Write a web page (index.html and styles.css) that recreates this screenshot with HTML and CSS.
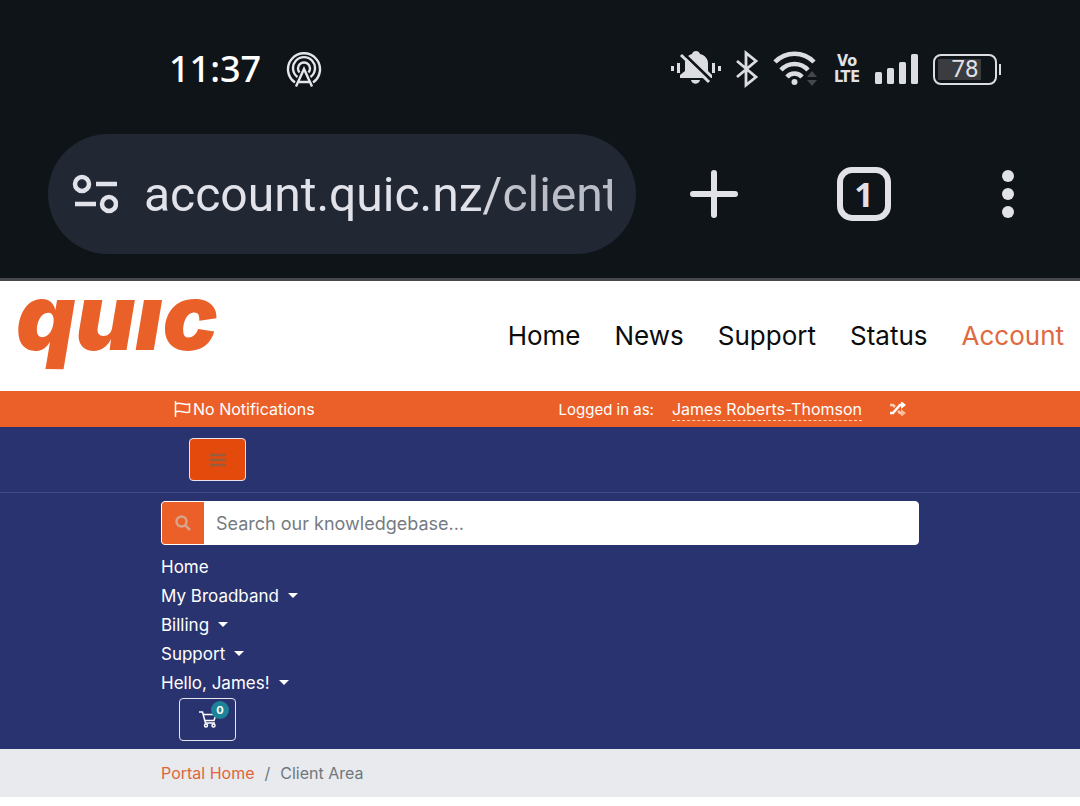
FILE: index.html
```
<!DOCTYPE html>
<html lang="en">

<head>
    <meta charset="UTF-8">
    <meta name="viewport" content="width=device-width, initial-scale=1.0">
    <title>Client Area - Quic</title>
    <link rel="stylesheet" href="styles.css">
</head>

<body>
    <div class="phone">
        <div class="status">
            <span class="clock">11:37</span>
            <svg class="cast" width="36" height="38" viewBox="0 0 36 38" fill="none" stroke="#e4e6ea" stroke-width="2.4">
                <path d="M9 32.500A16 16 0 1 1 27 32.500M11.500 27A11 11 0 1 1 24.500 27M13.500 22.500A6 6 0 1 1 22.500 22.500" />
                <path d="M10 36.500L18 19l8 17.500M12.500 32h11" />
            </svg>
            <div class="status-icons">
                <svg width="50" height="38" viewBox="0 0 50 38">
                    <path fill="#dcdde2" d="M9 28v-3l5-4v-8c0-5 3-8 7-9 1-4 7-4 8 0 5 1 8 5 8 9v8l4 4v3zM20 30h9c-1 5-8 5-9 0z" />
                    <path stroke="#0f1418" stroke-width="3" d="M12 3l28 27" />
                    <path stroke="#dcdde2" stroke-width="3" d="M10 5l28 27M1.500 16v5M7.500 13v10M42.500 13v10M48.500 16v5" />
                </svg>
                <svg width="24" height="38" viewBox="0 0 24 38" fill="none" stroke="#dcdde2" stroke-width="2.800">
                    <path d="M2 11l19 16-10 8V3l10 8L2 27" />
                </svg>
                <svg width="46" height="38" viewBox="0 0 46 38" fill="none" stroke="#dcdde2" stroke-width="4.500">
                    <path d="M2 12a27 27 0 0 1 39 0M8 20a18 18 0 0 1 27 0M14 27a10 10 0 0 1 15 0" />
                    <circle cx="21.500" cy="32" r="3" fill="#dcdde2" stroke="none" />
                    <path fill="#44474b" stroke="none" d="M34 27l5-6 5 6zM34 30h10l-5 6z" />
                </svg>
                <span class="volte">Vo<br>LTE</span>
                <svg width="44" height="38" viewBox="0 0 44 38" fill="#dcdde2">
                    <rect x="0" y="22" width="7" height="12" rx="1.500" />
                    <rect x="12" y="18" width="7" height="16" rx="1.500" />
                    <rect x="24" y="12" width="7" height="22" rx="1.500" />
                    <rect x="36" y="4" width="7" height="30" rx="1.500" />
                </svg>
                <span class="battery"><span>78</span></span>
            </div>
        </div>
        <div class="browser">
            <div class="address">
                <button class="site-info" aria-label="Site information">
                    <svg width="46" height="40" viewBox="0 0 46 40" fill="none" stroke="#e1e2ea" stroke-width="4.500">
                        <circle cx="10" cy="10" r="7" />
                        <path d="M24 10h21M3 30h21" />
                        <circle cx="37" cy="30" r="7" />
                    </svg>
                </button>
                <input class="url" type="text" aria-label="Address" value="account.quic.nz/clientarea.php">
            </div>
            <div class="browser-buttons">
                <button aria-label="New tab">
                    <svg width="48" height="48" viewBox="0 0 48 48" stroke="#e1e2e8" stroke-width="6" stroke-linecap="round">
                        <path d="M24 3v42M3 24h42" />
                    </svg>
                </button>
                <button class="tabs" aria-label="Open tabs">1</button>
                <button aria-label="Menu">
                    <svg width="12" height="48" viewBox="0 0 12 48" fill="#e1e2e8">
                        <circle cx="6" cy="6" r="6" />
                        <circle cx="6" cy="24" r="6" />
                        <circle cx="6" cy="42" r="6" />
                    </svg>
                </button>
            </div>
        </div>
    </div>

    <header class="site-header">
        <a class="logo" href="#" aria-label="Quic">quıc</a>
        <nav class="site-nav">
            <a href="#">Home</a>
            <a href="#">News</a>
            <a href="#">Support</a>
            <a href="#">Status</a>
            <a href="#" class="active">Account</a>
        </nav>
    </header>

    <div class="topbar">
        <div class="container">
            <button class="notifications">
                <svg width="17" height="16" viewBox="0 0 17 16" fill="none" stroke="#fff" stroke-width="1.500">
                    <path d="M1.500 0v16M1.500 3c5-3 8 2 14 0v8c-6 2-9-3-14 0" />
                </svg>
                No Notifications
            </button>
            <div class="logged-in">
                <span>Logged in as:</span>
                <a href="#" class="client">James Roberts-Thomson</a>
                <button class="switch" aria-label="Switch account">
                    <svg width="16" height="14" viewBox="0 0 16 14" fill="none" stroke="#fff" stroke-width="2.500">
                        <path d="M0 11h3l7-8h3" />
                        <path d="M0 3h3l2 2M8 9l2 2h3" stroke="#ffd0b8" />
                        <path d="M11 -1l5 4-5 4z" fill="#fff" stroke="none" />
                        <path d="M11 7l5 4-5 4z" fill="#ffb898" stroke="none" />
                    </svg>
                </button>
            </div>
        </div>
    </div>

    <div class="main-nav">
        <div class="toggle-row">
            <div class="container">
                <button class="toggler" aria-label="Toggle menu">
                    <svg width="16" height="14" viewBox="0 0 16 14" stroke="#9a5c3c" stroke-width="2.500">
                        <path d="M0 2h16M0 7h16M0 12h16" />
                    </svg>
                </button>
            </div>
        </div>
        <div class="container">
            <form class="search">
                <button type="button" aria-label="Search">
                    <svg width="16" height="16" viewBox="0 0 16 16" fill="none" stroke="#d9a28a" stroke-width="2.500">
                        <circle cx="6.500" cy="6.500" r="5" />
                        <path d="M10 10l5 5" />
                    </svg>
                </button>
                <input type="text" aria-label="Search our knowledgebase" placeholder="Search our knowledgebase...">
            </form>
            <ul class="menu">
                <li><a href="#">Home</a></li>
                <li><a href="#" class="dropdown">My Broadband</a></li>
                <li><a href="#" class="dropdown">Billing</a></li>
                <li><a href="#" class="dropdown">Support</a></li>
                <li><a href="#" class="dropdown">Hello, James!</a></li>
            </ul>
            <button class="cart" aria-label="Shopping cart">
                <svg width="18" height="17" viewBox="0 0 18 17" fill="none" stroke="#fff" stroke-width="1.500">
                    <path d="M0 1h3.500l3 11H16M4.500 3.500H17l-2 6H6" />
                    <circle cx="7" cy="14.500" r="1.500" />
                    <circle cx="14.500" cy="14.500" r="1.500" />
                </svg>
                <span class="badge">0</span>
            </button>
        </div>
    </div>

    <nav class="breadcrumb">
        <div class="container">
            <a href="#">Portal Home</a>
            <span class="slash">/</span>
            <span>Client Area</span>
        </div>
    </nav>
</body>

</html>
```
FILE: styles.css
```
* {
    box-sizing: border-box;
}

body {
    margin: 0;
    background: #fff;
    font-family: Inter, "Liberation Sans", sans-serif;
    font-size: 16px;
}

a {
    text-decoration: none;
}

button {
    padding: 0;
    border: 0;
    background: none;
    color: inherit;
    font-family: inherit;
}

svg {
    display: block;
}

.container {
    max-width: 758px;
    margin: 0 auto;
}

/* phone status bar and browser toolbar */
.phone {
    background: #0f1418;
    border-bottom: 3px solid #46484b;
    color: #e1e2e8;
    padding-bottom: 24px;
}

.status {
    display: flex;
    align-items: center;
    padding: 48px 80px 44px 169px;
    height: 134px;
}

.clock {
    color: #fff;
    font-family: "Noto Sans", sans-serif;
    font-size: 36px;
    font-weight: 500;
    line-height: 42px;
}

.cast {
    margin-left: 25px;
}

.status-icons {
    display: flex;
    align-items: center;
    gap: 14px;
    margin-left: auto;
}

.volte {
    width: 28px;
    font-family: "Liberation Sans Narrow", "DejaVu Sans Condensed", sans-serif;
    font-size: 16px;
    font-weight: 700;
    line-height: 16px;
    text-align: center;
}

.battery {
    position: relative;
    width: 64px;
    height: 31px;
    margin-right: 3px;
    padding: 3px;
    border: 2px solid #dcdde2;
    border-radius: 8px;
}

.battery span {
    display: block;
    background: linear-gradient(90deg, #3a3c40 80%, transparent 80%);
    font-family: Roboto, sans-serif;
    font-size: 24px;
    line-height: 21px;
    text-align: center;
}

.battery::after {
    content: "";
    position: absolute;
    right: -6px;
    top: 8px;
    width: 2px;
    height: 11px;
    background: #dcdde2;
}

.browser {
    display: flex;
    align-items: center;
    padding: 0 66px 0 48px;
}

.address {
    display: flex;
    flex: 1;
    align-items: center;
    gap: 26px;
    min-width: 0;
    height: 120px;
    padding: 0 24px;
    border-radius: 60px;
    background: #222833;
}

.url {
    flex: 1;
    min-width: 0;
    height: 60px;
    padding: 0;
    border: 0;
    outline: 0;
    background: none;
    color: #e1e2ea;
    font-family: Roboto, sans-serif;
    font-size: 48px;
    -webkit-mask-image: linear-gradient(90deg, #000 70%, rgba(0, 0, 0, 0.8) 80%);
    mask-image: linear-gradient(90deg, #000 70%, rgba(0, 0, 0, 0.8) 80%);
}

.browser-buttons {
    display: flex;
    flex: 0 0 378px;
    align-items: center;
    justify-content: space-between;
    padding-left: 54px;
}

.tabs {
    width: 54px;
    height: 54px;
    margin-right: 12px;
    border: 6px solid #e1e2e8;
    border-radius: 15px;
    font-family: "Open Sans", sans-serif;
    font-size: 34px;
    font-weight: 700;
    line-height: 42px;
}

/* site header */
.site-header {
    display: flex;
    align-items: center;
    justify-content: space-between;
    height: 110px;
    padding: 0 16px;
}

.logo {
    align-self: flex-start;
    color: #ea6029;
    font-size: 92px;
    font-style: italic;
    font-weight: 900;
    line-height: 72px;
}

.site-nav {
    display: flex;
    gap: 34px;
    font-size: 26px;
    line-height: 38px;
}

.site-nav a {
    color: #0c0c0c;
}

.site-nav .active {
    color: #dd6a41;
}

.topbar {
    background: #eb6028;
    color: #fff;
}

.topbar .container {
    display: flex;
    align-items: center;
    justify-content: space-between;
    height: 36px;
    padding: 0 13px;
}

.notifications {
    display: flex;
    align-items: center;
    gap: 2px;
    font-size: 16px;
}

.logged-in {
    display: flex;
    align-items: center;
    font-size: 15px;
}

.client {
    margin: 0 28px 0 18px;
    border-bottom: 1px dashed #ffd0b8;
    color: #fff;
    font-size: 16px;
    line-height: 22px;
}

/* navigation */
.main-nav {
    padding-bottom: 8px;
    background: #29336f;
}

.toggle-row {
    padding: 11px 0;
    margin-bottom: 8px;
    border-bottom: 1px solid #414b87;
}

.toggler,
.cart {
    display: flex;
    align-items: center;
    justify-content: center;
    width: 57px;
    height: 43px;
    border: 1px solid #e6e4f2;
    border-radius: 4px;
}

.toggler {
    margin-left: 28px;
    background: #e34a0c;
}

.search {
    display: flex;
    height: 44px;
    margin-bottom: 8px;
    border: 1px solid #fff;
    border-radius: 4px;
    overflow: hidden;
    background: #fff;
}

.search button {
    display: flex;
    align-items: center;
    justify-content: center;
    width: 42px;
    background: #eb6028;
}

.search input {
    flex: 1;
    padding: 0 12px;
    border: 0;
    outline: 0;
    font-family: inherit;
    font-size: 18px;
}

.search input::placeholder {
    color: #757b82;
}

.menu {
    margin: 0;
    padding: 0;
    list-style: none;
}

.menu li {
    line-height: 29px;
}

.menu a {
    color: #fff;
    font-size: 17px;
}

.dropdown::after {
    content: "";
    display: inline-block;
    margin-left: 9px;
    vertical-align: 4px;
    border: 5px solid transparent;
    border-top-color: #fff;
    border-bottom: 0;
}

.cart {
    position: relative;
    margin-left: 18px;
}

.badge {
    position: absolute;
    top: 2px;
    right: 6px;
    width: 18px;
    height: 18px;
    border-radius: 50%;
    background: #1d8398;
    color: #fff;
    font-size: 11px;
    font-weight: 700;
    line-height: 18px;
}

.breadcrumb {
    background: #e9eaed;
    color: #6f777e;
    line-height: 48px;
}

.breadcrumb .container {
    display: flex;
    gap: 10px;
}

.breadcrumb a {
    color: #e0653a;
}
```
